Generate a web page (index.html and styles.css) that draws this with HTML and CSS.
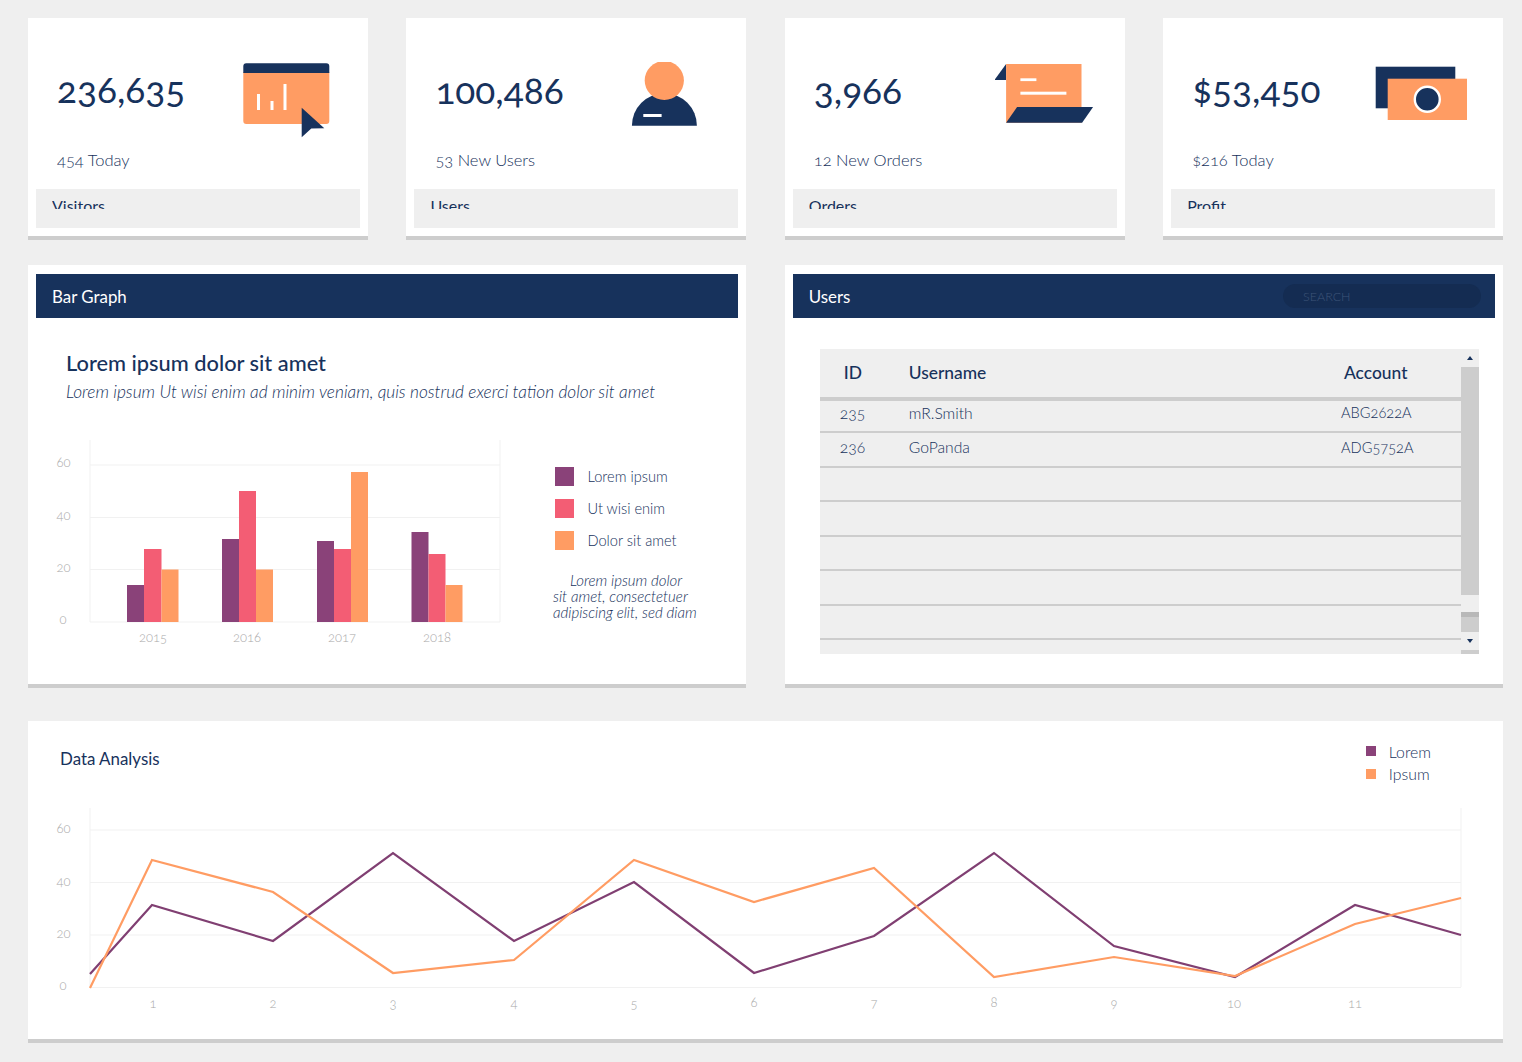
FILE: index.html
```html
<!DOCTYPE html>
<html lang="en">
<head>
    <meta charset="UTF-8">
    <title>Dashboard</title>
    <link rel="stylesheet" href="styles.css">
</head>
<body>

    <!-- stat cards -->
    <section class="stats">
        <div class="stat-card">
            <div class="stat-body">
                <div class="stat-text">
                    <div class="stat-value stat-value-low">236,635</div>
                    <div class="stat-note">454 Today</div>
                </div>
                <svg class="stat-icon" width="100" height="84" viewBox="0 0 100 84">
                    <path d="M5.300 10h86v49a3 3 0 0 1-3 3h-80a3 3 0 0 1-3-3z" fill="#ff9c63"/>
                    <path d="M8.300 1.300h80a3 3 0 0 1 3 3v6.700h-86v-6.700a3 3 0 0 1 3-3z" fill="#17325c"/>
                    <rect x="19" y="32" width="3" height="16" fill="#fff"/>
                    <rect x="32.500" y="39" width="3" height="9" fill="#fff"/>
                    <rect x="45.500" y="22" width="3" height="26" fill="#fff"/>
                    <path d="M63.700 45.700L86.300 66.300L73.300 66.500L63.700 75.300z" fill="#17325c"/>
                </svg>
            </div>
            <div class="stat-label"><span>Visitors</span></div>
        </div>
        <div class="stat-card">
            <div class="stat-body">
                <div class="stat-text">
                    <div class="stat-value">100,486</div>
                    <div class="stat-note">53 New Users</div>
                </div>
                <svg class="stat-icon" width="100" height="84" viewBox="0 0 100 84">
                    <path d="M15.900 63.700a32.500 32.500 0 0 1 65 0z" fill="#17325c"/>
                    <circle cx="48.300" cy="18.500" r="19.600" fill="#ff9c63"/>
                    <rect x="27.300" y="52" width="18.300" height="3" fill="#fff"/>
                </svg>
            </div>
            <div class="stat-label"><span>Users</span></div>
        </div>
        <div class="stat-card">
            <div class="stat-body">
                <div class="stat-text">
                    <div class="stat-value">3,966</div>
                    <div class="stat-note">12 New Orders</div>
                </div>
                <svg class="stat-icon" width="100" height="84" viewBox="0 0 100 84">
                    <path d="M-0.600 18L11.100 2v16z" fill="#17325c"/>
                    <rect x="11.100" y="2" width="75.400" height="58.700" fill="#ff9c63"/>
                    <rect x="25.400" y="16.300" width="16" height="2.800" fill="#fff"/>
                    <rect x="25.400" y="29.700" width="46" height="3" fill="#fff"/>
                    <path d="M22.100 45h76L87.100 60.700H11.100z" fill="#17325c"/>
                </svg>
            </div>
            <div class="stat-label"><span>Orders</span></div>
        </div>
        <div class="stat-card">
            <div class="stat-body">
                <div class="stat-text">
                    <div class="stat-value stat-value-low">$53,450</div>
                    <div class="stat-note">$216 Today</div>
                </div>
                <svg class="stat-icon" width="100" height="84" viewBox="0 0 100 84">
                    <rect x="2.700" y="4.700" width="79.600" height="41.600" fill="#17325c"/>
                    <rect x="14.700" y="16.700" width="79.300" height="41.300" fill="#ff9c63"/>
                    <circle cx="54.300" cy="37.300" r="12.500" fill="#17325c" stroke="#fff" stroke-width="2.400"/>
                </svg>
            </div>
            <div class="stat-label"><span>Profit</span></div>
        </div>
    </section>

    <section class="panels">
        <!-- bar graph -->
        <div class="panel">
            <div class="panel-head">
                <h2>Bar Graph</h2>
            </div>
            <div class="bar-intro">
                <h3>Lorem ipsum dolor sit amet</h3>
                <p>Lorem ipsum Ut wisi enim ad minim veniam, quis nostrud exerci tation dolor sit amet</p>
            </div>
            <div class="bar-row">
                <svg class="chart" width="480" height="226" viewBox="0 0 480 226">
                    <g class="grid">
                        <line x1="62" y1="11" x2="62" y2="193"/>
                        <line x1="472" y1="11" x2="472" y2="193"/>
                        <line x1="62" y1="36" x2="472" y2="36"/>
                        <line x1="62" y1="88.500" x2="472" y2="88.500"/>
                        <line x1="62" y1="140.500" x2="472" y2="140.500"/>
                        <line x1="62" y1="193" x2="472" y2="193"/>
                    </g>
                    <g class="axis-y">
                        <text x="28.500" y="38">60</text>
                        <text x="28.500" y="91">40</text>
                        <text x="28.500" y="143">20</text>
                        <text x="31.500" y="195">0</text>
                    </g>
                    <g class="axis-x">
                        <text x="125" y="213">2015</text>
                        <text x="219" y="213">2016</text>
                        <text x="314" y="213">2017</text>
                        <text x="409" y="213">2018</text>
                    </g>
                    <rect class="s1" x="99" y="156" width="17" height="37"/>
                    <rect class="s2" x="116" y="120" width="17.500" height="73"/>
                    <rect class="s3" x="133.500" y="140.500" width="17" height="52.500"/>
                    <rect class="s1" x="194" y="110" width="17" height="83"/>
                    <rect class="s2" x="211" y="62" width="17" height="131"/>
                    <rect class="s3" x="228" y="140.500" width="17" height="52.500"/>
                    <rect class="s1" x="289" y="112" width="17" height="81"/>
                    <rect class="s2" x="306" y="120" width="17.500" height="73"/>
                    <rect class="s3" x="323" y="43" width="17" height="150"/>
                    <rect class="s1" x="383.500" y="103" width="17" height="90"/>
                    <rect class="s2" x="400.500" y="125" width="17" height="68"/>
                    <rect class="s3" x="417.500" y="156" width="17" height="37"/>
                </svg>
                <div class="bar-side">
                    <ul class="bar-legend">
                        <li><i class="swatch s1-bg"></i>Lorem ipsum</li>
                        <li><i class="swatch s2-bg"></i>Ut wisi enim</li>
                        <li><i class="swatch s3-bg"></i>Dolor sit amet</li>
                    </ul>
                    <p class="bar-note">Lorem ipsum dolor<br>sit amet, consectetuer<br>adipiscing elit, sed diam</p>
                </div>
            </div>
        </div>

        <!-- users table -->
        <div class="panel">
            <div class="panel-head">
                <h2>Users</h2>
                <input class="search" type="text" placeholder="SEARCH">
            </div>
            <div class="table-wrap">
                <div class="table-scroll">
                    <table class="users">
                        <thead>
                            <tr><th class="col-id">ID</th><th class="col-name">Username</th><th class="col-acc">Account</th></tr>
                        </thead>
                        <tbody>
                            <tr class="row-first"><td class="col-id">235</td><td class="col-name">mR.Smith</td><td class="col-acc">ABG2622A</td></tr>
                            <tr><td class="col-id">236</td><td class="col-name">GoPanda</td><td class="col-acc">ADG5752A</td></tr>
                            <tr><td></td><td></td><td></td></tr>
                            <tr><td></td><td></td><td></td></tr>
                            <tr><td></td><td></td><td></td></tr>
                            <tr><td></td><td></td><td></td></tr>
                            <tr><td></td><td></td><td></td></tr>
                        </tbody>
                    </table>
                </div>
                <div class="scrollbar">
                    <div class="sb-btn"><span class="arrow-up"></span></div>
                    <div class="sb-track"></div>
                    <div class="sb-gap"></div>
                    <div class="sb-thumb"></div>
                    <div class="sb-btn"><span class="arrow-down"></span></div>
                    <div class="sb-end"></div>
                </div>
            </div>
        </div>
    </section>

    <!-- line chart -->
    <section class="panel analysis">
        <div class="analysis-head">
            <h2>Data Analysis</h2>
            <ul class="line-legend">
                <li><i class="dot s1-bg"></i>Lorem</li>
                <li><i class="dot s3-bg"></i>Ipsum</li>
            </ul>
        </div>
        <svg class="chart" width="1475" height="220" viewBox="0 0 1475 220">
            <g class="grid">
                <line x1="62" y1="6" x2="62" y2="185"/>
                <line x1="1433" y1="6" x2="1433" y2="185"/>
                <line x1="62" y1="28" x2="1433" y2="28"/>
                <line x1="62" y1="80.500" x2="1433" y2="80.500"/>
                <line x1="62" y1="133" x2="1433" y2="133"/>
                <line x1="62" y1="185.500" x2="1433" y2="185.500"/>
            </g>
            <g class="axis-y">
                <text x="28.500" y="31">60</text>
                <text x="28.500" y="84">40</text>
                <text x="28.500" y="136">20</text>
                <text x="31.500" y="188">0</text>
            </g>
            <g class="axis-x">
                <text x="125" y="206">1</text>
                <text x="245" y="206">2</text>
                <text x="365" y="206">3</text>
                <text x="486" y="206">4</text>
                <text x="606" y="206">5</text>
                <text x="726" y="205">6</text>
                <text x="846" y="206">7</text>
                <text x="966" y="205">8</text>
                <text x="1086" y="206">9</text>
                <text x="1206" y="206">10</text>
                <text x="1327" y="206">11</text>
            </g>
            <polyline class="line-s1" points="62,172 124,103 245,139 365,51 486,139 606,80 726,171 846,134 966,51 1086,144 1207,175 1327,103 1433,133"/>
            <polyline class="line-s3" points="62,186 124,58 245,90 365,171 486,158 606,58 726,100 846,66 966,175 1086,155 1207,174 1327,122 1433,96"/>
        </svg>
    </section>

</body>
</html>
```

FILE: styles.css
```css
* {
    box-sizing: border-box;
}

body {
    font-family: "Lato", "Open Sans", sans-serif;
    font-variant-numeric: oldstyle-nums;
    background-color: #efefef;
    color: #17325c;
    margin: 0;
    padding: 18px 19px 0 28px;
    height: 1062px;
    overflow: hidden;
}

h2, h3, p, ul {
    margin: 0;
    padding: 0;
}

ul {
    list-style: none;
}

.stats {
    display: grid;
    grid-template-columns: repeat(4, 1fr);
    column-gap: 38.5px;
}

.stat-card {
    background-color: #fff;
    border-bottom: 4px solid #cdcdcd;
    height: 222px;
    padding: 0 8px 8px;
    display: flex;
    flex-direction: column;
}

.stat-body {
    flex: 1;
    display: flex;
    justify-content: space-between;
    padding: 0 22px 0 21px;
}

.stat-value {
    font-size: 37px;
    line-height: 44px;
    margin-top: 50px;
}

.stat-value-low {
    margin-top: 49px;
    height: 45px;
}

.stat-note {
    font-size: 16.5px;
    font-weight: 300;
    line-height: 22px;
    margin-top: 37px;
}

.stat-icon {
    margin-top: 44px;
}

.stat-label {
    background-color: #efefef;
    height: 39px;
    padding: 7px 16px 0;
    font-size: 16px;
    line-height: 20px;
}

/* text is cut off in the grey strip */
.stat-label span {
    display: block;
    height: 13px;
    overflow: hidden;
}

.panels {
    display: grid;
    grid-template-columns: 1fr 1fr;
    column-gap: 38.5px;
    margin-top: 25px;
}

.panel {
    background-color: #fff;
    border-bottom: 4px solid #cdcdcd;
    height: 423px;
    display: flow-root;
}

.panel-head {
    background-color: #17325c;
    color: #fff;
    height: 44px;
    margin: 9px 8px 0;
    padding: 0 14px 0 16px;
    display: flex;
    align-items: center;
    justify-content: space-between;
}

.panel-head h2,
.analysis-head h2 {
    font-size: 16.9px;
    font-weight: 400;
}

.search {
    width: 198px;
    height: 24px;
    border: none;
    border-radius: 12px;
    background-color: #142c52;
    padding: 0 20px;
    font-family: inherit;
    font-size: 12.5px;
    font-weight: 300;
    outline: none;
}

.search::placeholder {
    color: #3d5478;
}

.bar-intro {
    padding: 32px 30px 0 38px;
}

.bar-intro h3 {
    font-size: 21.8px;
    font-weight: 500;
    line-height: 26px;
}

.bar-intro p {
    font-size: 17.3px;
    font-weight: 300;
    font-style: italic;
    line-height: 22px;
    margin-top: 5px;
}

.bar-row {
    display: flex;
    margin-top: 26px;
}

.chart {
    display: block;
    flex: none;
}

.grid line {
    stroke: #f1f1f1;
    stroke-width: 1;
}

.axis-y text,
.axis-x text {
    font-size: 13px;
    font-weight: 300;
    fill: #a9a9a9;
}

.axis-x text {
    text-anchor: middle;
}

.s1 { fill: #8a4279; }
.s2 { fill: #f35d74; }
.s3 { fill: #ff9c63; }
.s1-bg { background-color: #8a4279; }
.s2-bg { background-color: #f35d74; }
.s3-bg { background-color: #ff9c63; }

.bar-side {
    padding: 37px 0 0 47px;
}

.bar-legend li {
    display: flex;
    align-items: center;
    gap: 13.5px;
    height: 20px;
    margin-bottom: 12px;
    font-size: 14.6px;
    font-weight: 300;
}

.swatch {
    width: 19px;
    height: 19px;
    flex: none;
}

.bar-note {
    font-size: 15px;
    font-weight: 300;
    font-style: italic;
    line-height: 16px;
    text-indent: 17px;
    white-space: nowrap;
    margin: 22px 0 0 -2px;
}

.table-wrap {
    display: flex;
    height: 304.5px;
    margin: 31px 24.5px 0 35px;
    background-color: #efefef;
}

.table-scroll {
    flex: 1;
}

.users {
    width: 100%;
    border-collapse: collapse;
    table-layout: fixed;
}

.users th {
    height: 50px;
    border-bottom: 4px solid #cdcdcd;
    font-size: 17.4px;
    font-weight: 500;
    text-align: left;
    padding: 0 0 2px;
}

.users td {
    height: 34.5px;
    border-bottom: 2px solid #cdcdcd;
    font-size: 15.7px;
    font-weight: 300;
    padding: 0 0 4px;
}

.users .row-first td {
    height: 33px;
    padding-bottom: 7px;
}

.users .col-id {
    width: 89px;
    padding-left: 20px;
}

.users .col-acc {
    width: 120px;
}

.users td.col-acc {
    font-size: 14.6px;
}

.users th.col-id {
    padding-left: 24px;
}

.users th.col-acc {
    padding-left: 3px;
}

.scrollbar {
    width: 17.5px;
    flex: none;
    display: flex;
    flex-direction: column;
}

.sb-btn {
    height: 18px;
    display: flex;
    align-items: center;
    justify-content: center;
}

.arrow-up {
    border: 3px solid transparent;
    border-top: none;
    border-bottom: 4px solid #17325c;
}

.arrow-down {
    border: 3px solid transparent;
    border-bottom: none;
    border-top: 4px solid #17325c;
}

.sb-track {
    height: 228px;
    background-color: #cdcdcd;
}

.sb-gap {
    height: 17px;
    background-color: #efefef;
}

.sb-thumb {
    height: 20px;
    background-color: #cdcdcd;
    border-top: 5px solid #b8b8b8;
}

.sb-end {
    height: 3.5px;
    background-color: #cdcdcd;
}

.analysis {
    margin-top: 33px;
    height: 322px;
}

.analysis-head {
    display: flex;
    justify-content: space-between;
    padding: 19px 72px 0 32px;
    height: 81px;
}

.analysis-head h2 {
    margin-top: 8px;
}

.line-legend li {
    display: flex;
    align-items: center;
    gap: 12.5px;
    height: 22.5px;
    font-size: 15.8px;
    font-weight: 300;
}

.dot {
    width: 10px;
    height: 10px;
}

.line-s1,
.line-s3 {
    fill: none;
    stroke-width: 2.2;
}

.line-s1 { stroke: #803f72; }
.line-s3 { stroke: #ff9c63; }
```
